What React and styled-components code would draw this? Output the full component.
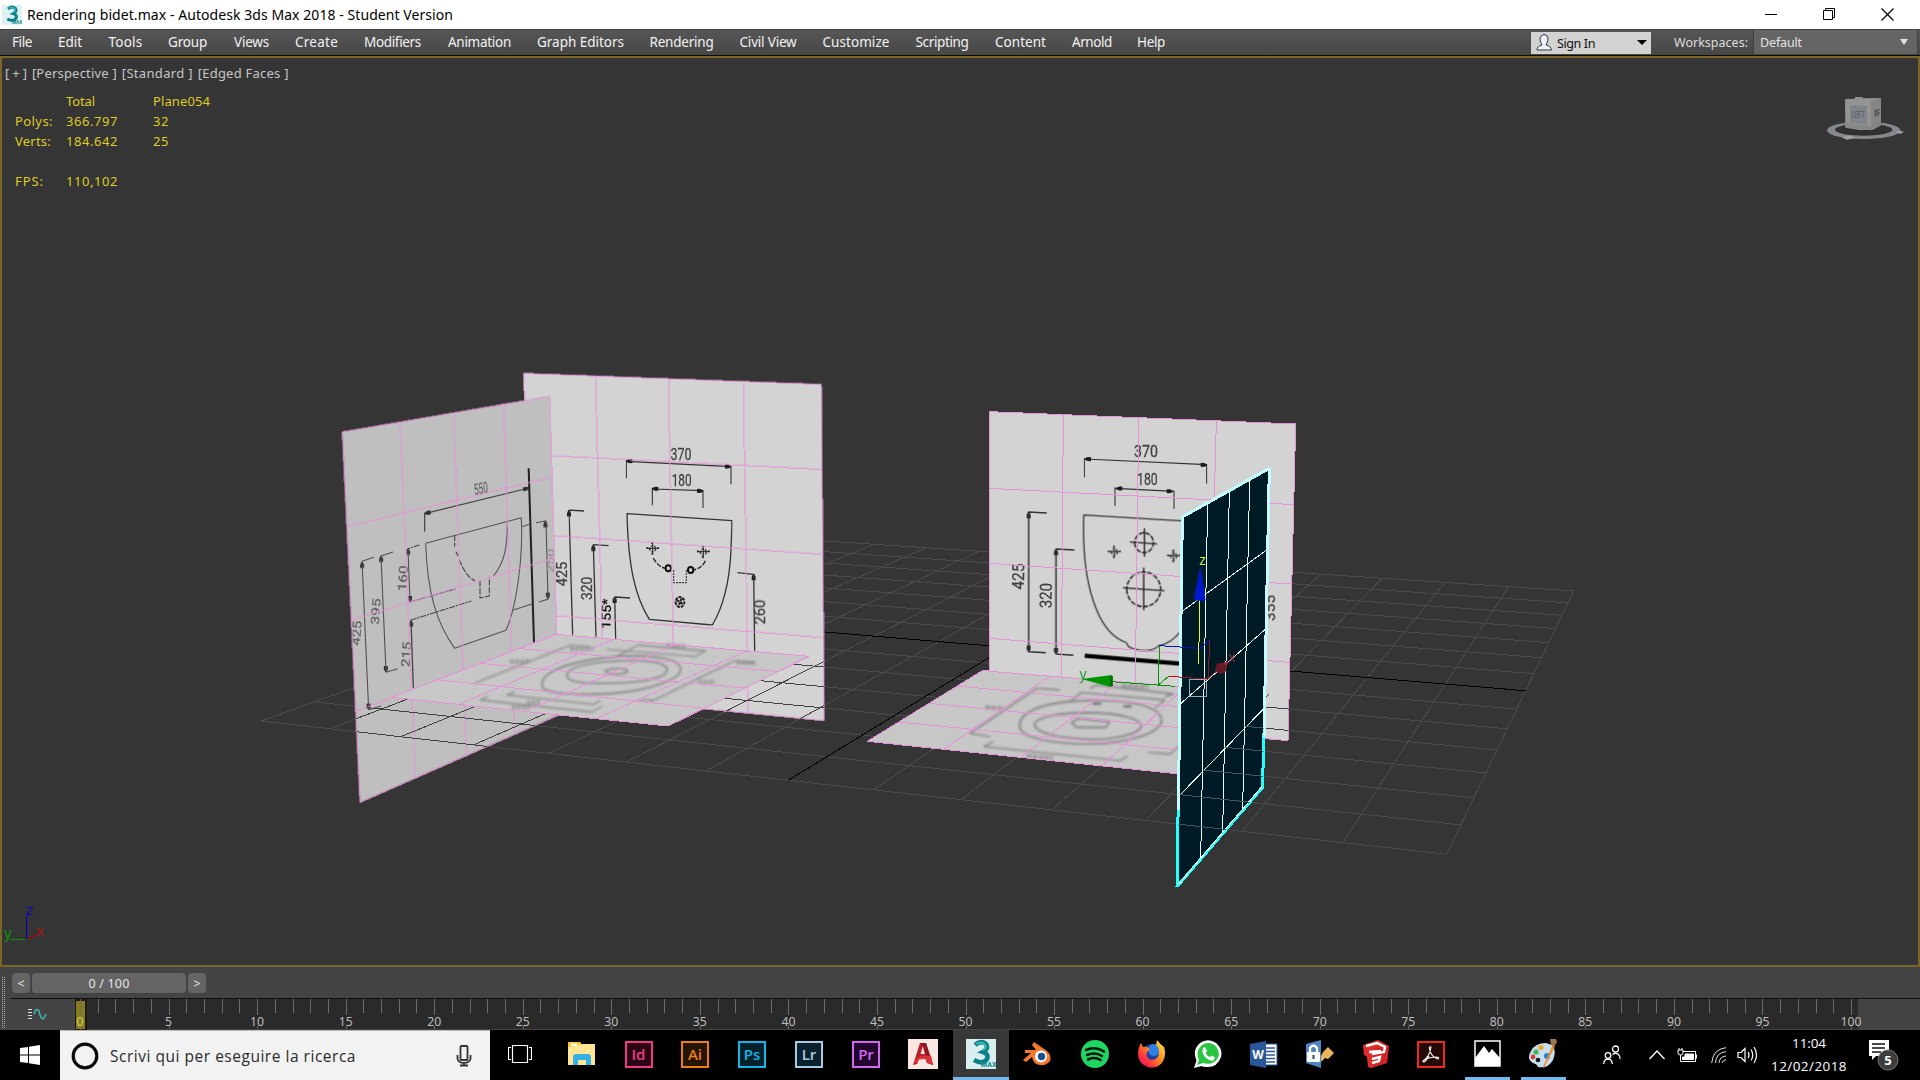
import React, { useLayoutEffect, useRef, useState } from "react";
import styled, { createGlobalStyle } from "styled-components";

const Global = createGlobalStyle`
  * { box-sizing: border-box; }
  body { margin: 0; background: #444; overflow: hidden; }
`;

const Screen = styled.div`
  width: 1920px;
  height: 1080px;
  display: flex;
  flex-direction: column;
  background: #444;
  font-family: "Noto Sans", "Open Sans", sans-serif;
  overflow: hidden;
`;

const FitSpan = styled.span`
  display: inline-block;
  white-space: pre;
  flex: none;
`;

/* Tracks the text so that it fills the given width. */
function Fit({ w, children }) {
  const ref = useRef(null);
  const [spacing, setSpacing] = useState(0);
  useLayoutEffect(() => {
    const natural = ref.current.getBoundingClientRect().width;
    setSpacing((w - natural) / String(children).length);
  }, [w, children]);
  return (
    <FitSpan ref={ref} style={{ letterSpacing: spacing }}>
      {children}
    </FitSpan>
  );
}

/* ---------- title bar ---------- */
const TitleBar = styled.header`
  height: 29px;
  flex: none;
  display: flex;
  align-items: center;
  background: #fff;
  color: #000;
  padding-left: 2px;
  font-size: 14px;
  line-height: 28px;
`;
const TitleText = styled.div`
  flex: 1;
  padding-left: 5px;
`;
const WindowButton = styled.div`
  width: 58.5px;
  height: 29px;
  display: flex;
  align-items: center;
  justify-content: center;
`;
const WindowButtons = styled.div`
  display: flex;
  padding-right: 3px;
`;

/* ---------- menu bar ---------- */
const MenuBar = styled.nav`
  height: 27px;
  flex: none;
  display: flex;
  align-items: center;
  background: linear-gradient(#565656, #464646);
  border-top: 1px solid #3f4440;
  border-bottom: 1px solid #0c0c0c;
  color: #f2f2f2;
  font-size: 13.5px;
  line-height: 25px;
  padding: 0 2px 0 12px;
`;
const MenuItems = styled.div`
  display: flex;
  flex: 1;
`;
const MenuItem = styled.div`
  width: ${(p) => p.$w}px;
  flex: none;
`;
const SignIn = styled.div`
  width: 120px;
  height: 22px;
  background: #d2d2d2;
  color: #111;
  display: flex;
  align-items: center;
  padding: 0 4px 0 5px;
  font-size: 12.5px;
`;
const SignInText = styled.div`
  flex: 1;
  padding: 2px 0 0 5px;
`;
const WorkspaceLabel = styled.div`
  padding: 0 5px 0 23px;
  color: #dcdcdc;
  font-size: 12.5px;
`;
const WorkspaceSelect = styled.div`
  width: 165px;
  height: 25px;
  background: #646464;
  border: 1px solid #404040;
  border-top: 0;
  color: #e4e4e4;
  display: flex;
  align-items: center;
  justify-content: space-between;
  padding: 0 9px 0 6px;
  font-size: 12.5px;
`;

/* ---------- viewport ---------- */
const Viewport = styled.main`
  height: 911px;
  flex: none;
  border: 2px solid #7a6629;
  background: #353535;
  position: relative;
`;
const Scene = styled.svg`
  display: block;
  width: 1916px;
  height: 907px;
`;
const Overlay = styled.div`
  position: absolute;
  left: 0;
  top: 0;
  color: #c6c6c6;
  font-size: 13px;
  line-height: 20px;
  padding: 5px 0 0 3px;
`;
const ViewLabels = styled.div`
  display: flex;
  gap: 4.9px;
`;
const Stats = styled.div`
  display: grid;
  grid-template-columns: 51px 87px 80px;
  grid-auto-rows: 20px;
  justify-items: start;
  padding: 7.5px 0 0 10px;
  color: #dfcb24;
`;

/* ---------- time controls ---------- */
const TimeArea = styled.section`
  height: 63px;
  flex: none;
  display: flex;
  background: #444;
`;
const Grip = styled.div`
  width: 3px;
  margin: 10px 6px 2px 2px;
  border-left: 1px dotted #aaa;
  border-right: 1px dotted #aaa;
`;
const TimeRows = styled.div`
  flex: 1;
  display: flex;
  flex-direction: column;
`;
const SliderRow = styled.div`
  height: 31px;
  display: flex;
  gap: 2px;
  padding: 6px 0 0 1px;
`;
const SliderButton = styled.div`
  width: ${(p) => p.$w}px;
  height: 20px;
  border-radius: 4px;
  background: #646464;
  color: #e6e6e6;
  font-size: 12.5px;
  line-height: 22px;
  text-align: center;
`;
const TrackRow = styled.div`
  height: 32px;
  display: flex;
  border-top: 1px solid #0e0e0e;
`;
const CurveButton = styled.div`
  width: 64px;
  display: flex;
  align-items: flex-start;
  padding: 9px 0 0 17px;
`;
const Track = styled.svg`
  display: block;
  width: 1783px;
  height: 31px;
  background: #2a2a2a;
  overflow: visible;
`;

/* ---------- taskbar ---------- */
const Taskbar = styled.footer`
  height: 50px;
  flex: none;
  display: flex;
  background: #000;
  color: #fff;
  font-family: "Open Sans", "Noto Sans", sans-serif;
`;
const StartButton = styled.div`
  width: 60px;
  display: flex;
  align-items: center;
  justify-content: center;
`;
const SearchBox = styled.div`
  width: 430px;
  background: #f2f2f2;
  border-top: 1px solid #b9b9b9;
  display: flex;
  align-items: center;
  color: #2b2b2b;
  font-size: 15.5px;
  padding: 0 18px 0 11px;
`;
const SearchText = styled.div`
  flex: 1;
  padding: 0 0 0 11px;
`;
const Slot = styled.div`
  width: ${(p) => p.$w || 57}px;
  flex: none;
  display: flex;
  align-items: center;
  justify-content: center;
  padding-bottom: ${(p) => (p.$open ? 0 : 2)}px;
  background: ${(p) => (p.$active ? "#383838" : "transparent")};
  border-bottom: ${(p) => (p.$open ? "3px solid #76b9ed" : "0")};
  margin: 0 ${(p) => p.$inset || 0}px;
`;
const AdobeTile = styled.div`
  width: 28px;
  height: 27px;
  border: 2px solid ${(p) => p.$c};
  background: ${(p) => p.$bg};
  color: ${(p) => p.$c};
  display: flex;
  align-items: center;
  justify-content: center;
  font-size: 15px;
  font-weight: 600;
  line-height: 20px;
`;
const Tray = styled.div`
  flex: 1;
  display: flex;
  align-items: center;
  padding-left: 31px;
`;
const TrayIcon = styled.div`
  width: ${(p) => p.$w}px;
  display: flex;
  justify-content: center;
  flex: none;
`;
const Clock = styled.div`
  width: 88px;
  display: flex;
  flex-direction: column;
  align-items: center;
  font-size: 13.5px;
  line-height: 23px;
`;

const S = 1 / 3;

/* Projects the ground plane (14 x 14 cells) on the view. */
function solveGround() {
  const src = [[0, 0], [14, 0], [14, 14], [0, 14]];
  const dst = [[261, 721], [1446.7, 854.3], [1573.7, 591], [772.7, 537.5]];
  const m = [];
  src.forEach(([u, v], i) => {
    const [x, y] = dst[i];
    m.push([u, v, 1, 0, 0, 0, -u * x, -v * x, x]);
    m.push([0, 0, 0, u, v, 1, -u * y, -v * y, y]);
  });
  for (let c = 0; c < 8; c++) {
    let p = c;
    for (let r = c + 1; r < 8; r++) if (Math.abs(m[r][c]) > Math.abs(m[p][c])) p = r;
    [m[c], m[p]] = [m[p], m[c]];
    for (let r = 0; r < 8; r++) {
      if (r === c) continue;
      const f = m[r][c] / m[c][c];
      for (let k = c; k < 9; k++) m[r][k] -= f * m[c][k];
    }
  }
  const h = m.map((row, i) => row[8] / row[i]);
  return (u, v) => {
    const w = h[6] * u + h[7] * v + 1;
    return [(h[0] * u + h[1] * v + h[2]) / w, (h[3] * u + h[4] * v + h[5]) / w];
  };
}
const ground = solveGround();
const groundLines = [];
for (let i = 0; i <= 14; i++) {
  groundLines.push({ k: "u" + i, a: ground(i, 0), b: ground(i, 14), axis: i === 7 });
  groundLines.push({ k: "v" + i, a: ground(0, i), b: ground(14, i), axis: i === 7 });
}
groundLines.sort((p, q) => p.axis - q.axis);

function Ground({ color, axis = "#000", clip }) {
  return (
    <g clipPath={clip} shapeRendering="crispEdges">
      {groundLines.map((l) => (
        <line key={l.k} x1={l.a[0]} y1={l.a[1]} x2={l.b[0]} y2={l.b[1]} stroke={l.axis ? axis : color} />
      ))}
    </g>
  );
}

const Strokes = styled.path`
  fill: none;
  stroke: ${(p) => p.$c || "#333"};
  stroke-width: ${(p) => p.$w || 1.1}px;
  stroke-linejoin: bevel;
  vector-effect: non-scaling-stroke;
  stroke-dasharray: ${(p) => p.$dash || "none"};
  opacity: ${(p) => p.$o || 1};
`;
const Mesh = styled(Strokes).attrs({ shapeRendering: "crispEdges" })`
  stroke: ${(p) => p.$c || "#e692d9"};
  stroke-width: ${(p) => p.$w || 1}px;
`;

function Dim({ x, y, r = 0, skew = 0, w = 64, size = 48, fill = "#404040", children }) {
  return (
    <text
      transform={`translate(${x} ${y}) rotate(${r}) skewY(${skew})`}
      fontFamily="Roboto, sans-serif"
      fontSize={size}
      fontWeight="400"
      textLength={w}
      lengthAdjust="spacingAndGlyphs"
      textAnchor="middle"
      fill={fill}
      stroke={fill}
      strokeWidth="0.8"
    >
      {children}
    </text>
  );
}

function Heads({ pts, c = "#1c1c1c" }) {
  return pts.map(([x, y, a], i) => (
    <path key={i} d="M0 -2L8 -6H18V6H8L0 2Z" fill={c} transform={`translate(${x} ${y}) rotate(${a})`} />
  ));
}

const Cross = ({ x, y }) => (
  <g transform={`translate(${x} ${y})`}>
    <Strokes $c="#333" $w={1.1} d="M-19 -1H19M0 -19V19" />
    <Strokes $c="#333" $w={1.4} $dash="2 1.4" d="M-9 0A9 9 0 1 0 9 0A9 9 0 1 0 -9 0M-17 -5V4M17 -5V4M-5 -16H5M-5 15H5" />
  </g>
);

function LeftModel() {
  return (
    <>
      <g transform={`translate(330 360) scale(${S})`}>
        <path fill="#d3d3d3" d="M581 40L1474 73L1483 1082L1118 1046L600 995Z" />
        <g filter="url(#ink)">
          <Dim x={1053} y={300} w={63}>370</Dim>
          <Dim x={1055} y={377} w={60}>180</Dim>
          <Strokes d="M889 304L1203 320M889 300V355M1203 318V373M967 387L1119 392M967 383V436M1119 390V444" />
          <Heads pts={[[889, 303, 2], [1203, 320, 182], [967, 386, 2], [1119, 393, 182], [717, 451, 90], [790, 555, 90], [854, 711, 90], [1271, 643, 90]]} />
          <Strokes $w={1.3} d="M891 461L1206 482L1203 570C1199 660 1180 740 1147 795L958 778C915 710 895 620 891 461Z" />
          <Cross x={968} y={566} />
          <Cross x={1120} y={576} />
          <Strokes $c="#222" $w={1.4} $dash="5 1.5" d="M970 594Q985 622 1008 625M1126 602Q1116 626 1089 630" />
          <Strokes $c="#111" $w={2} d="M1007 625A8 9 0 1 0 1023 625A8 9 0 1 0 1007 625M1074 630A8 9 0 1 0 1090 630A8 9 0 1 0 1074 630" />
          <Strokes $c="#333" $dash="2 1" d="M1031 630V668H1069V628" />
          <Strokes $c="#222" $w={2} $dash="3 1" d="M1037 726A13 15 0 1 0 1063 726A13 15 0 1 0 1037 726M1040 720L1060 733M1055 715L1045 740" />
          <Strokes $w={1.3} d="M762 453L717 450L728 824M836 557L790 554L798 830M900 714L854 711L857 836M1222 638L1271 643L1274 872" />
          <Dim x={712} y={642} r={-90} w={74} size={44}>425</Dim>
          <Dim x={785} y={685} r={-90} w={70} size={44}>320</Dim>
          <Dim x={842} y={762} r={-88} w={90} size={38} fill="#111">155*</Dim>
          <Dim x={1306} y={756} r={-90} w={74} size={44}>260</Dim>
        </g>
        <Mesh d="M796 47L817 835M1015 55L1030 852M1240 64L1255 1058M663 287L1475 328M672 527L1478 583M680 767L1481 833M585 140L581 40L1474 73L1483 1082L1118 1046" />

        <path fill="#bfbfbf" d="M37 216L659 109L680 823L686 1065L90 1327Z" />
        <g filter="url(#ink)">
          <Dim x={454} y={401} r={-6} skew={-6} w={42} size={46} fill="#666">550</Dim>
          <Strokes $c="#444" $w={1.2} d="M284 461L597 384M284 458V515" />
          <Heads c="#333" pts={[[284, 461, -14], [597, 384, 166], [96, 606, 88], [153, 588, 88], [234, 566, 88], [240, 726, 270], [243, 782, 88], [646, 484, 88], [654, 716, 268], [116, 1049, 268], [168, 936, 268]]} />
          <Strokes $c="#222" $w={2} d="M596 325L612 848" />
          <Strokes $c="#555" d="M287 550L574 473C580 590 560 740 528 811L374 865C320 790 292 700 287 550M576 500L598 493M550 750L606 732M532 482C533 570 520 612 490 648" />
          <Strokes $c="#444" $dash="6 1.5" d="M388 600C400 630 415 655 435 662M450 662V714L478 708V652M374 526V560M378 575L384 588" />
          <Strokes $c="#505050" d="M132 592L96 604L116 1049L153 1038M189 576L153 588L168 937L203 926M234 566L240 726M618 488L648 482L654 718L627 726" />
          <Strokes $c="#444" $dash="6 1 2 1" d="M268 555L234 566M243 780L424 723M240 726L378 686" />
          <Strokes $c="#444" $w={1.3} d="M243 780L250 984" />
          <Dim x={92} y={820} r={-86} w={74} size={36} fill="#666">425</Dim>
          <Dim x={149} y={755} r={-86} w={78} size={34} fill="#666">395</Dim>
          <Dim x={231} y={656} r={-86} w={78} size={36} fill="#606060">160</Dim>
          <Dim x={241} y={884} r={-86} w={76} size={36} fill="#606060">215</Dim>
          <Dim x={673} y={602} r={-88} w={72} size={26} fill="#909090">250</Dim>
        </g>
        <Mesh d="M210 186L257 1252M371 158L409 1185M521 131L553 1120M50 500L663 352M63 780L671 594M77 1055L680 823M680 823L659 109L37 216L90 1327L686 1065" />
      </g>
      <Ground color="#404040" axis="#222" clip="url(#underLeft)" />
      <g transform={`translate(330 360) scale(${S})`}>
        <path fill="#c7c7c7" d="M680 823L1437 889L1015 1098L686 1065L185 1012Z" />
        <g filter="url(#soft)">
          <Strokes $c="#808080" $w={1.3} $o={0.9} d="M433 970L720 856L780 860M860 890L925 855L1127 873L1100 886M450 1020L785 1056L815 1040M530 1005L790 1033L812 1022M965 1024L1215 902L1270 908M925 1020H970M450 1020L475 1010M530 1005L555 995M830 868L1100 890" />
          <Strokes $c="#808080" $w={1.6} d="M640 985C620 945 690 908 850 890C960 882 1060 895 1052 932C1045 960 960 990 850 1000C740 1008 655 1000 640 985Z" />
          <Strokes $c="#808080" $w={1.5} d="M715 955C690 925 780 903 890 902C980 900 1025 915 1008 938C985 965 880 970 800 970C755 970 725 966 715 955M825 934C840 920 900 925 892 935C880 946 830 944 825 934Z" />
          <Strokes $c="#808080" $w={4.5} $o={0.55} $dash="4 1" d="M720 868L790 866M540 905L597 904M590 1028L630 1026M545 1042L600 1042M1220 908L1280 908M1105 966L1155 966M1010 856L1070 859" />
        </g>
        <Mesh d="M855 837L393 1030M1031 855L601 1048M1252 872L803 1074M569 866L1343 934M449 910L1245 984M328 960L1122 1045M680 823L1437 889L1015 1098L686 1065L185 1012Z" />
      </g>
    </>
  );
}

function RightModel() {
  return (
    <>
      <g transform={`translate(860 400) scale(${S})`}>
        <path fill="#d3d3d3" d="M388 35L1307 72L1284 1022L950 985L388 830Z" />
        <g filter="url(#ink)">
          <Dim x={858} y={172} w={72} size={52}>370</Dim>
          <Dim x={862} y={254} w={62} size={52}>180</Dim>
          <Strokes d="M673 177L1040 194M673 174V232M1040 192V251M765 265L942 274M765 262V318M942 272V326" />
          <Heads pts={[[675, 177, 2], [1040, 195, 182], [769, 265, 2], [938, 274, 182], [506, 337, 90], [588, 448, 90], [506, 755, 270], [588, 762, 270]]} />
          <Strokes $w={1.3} d="M970 363L671 345C667 470 680 560 710 630C735 690 765 716 798 727L806 740C835 756 878 756 896 737C925 734 948 712 965 690" />
          <Strokes $c="#222" $w={1.5} $dash="5 1.5" d="M824 428A28 30 0 1 0 880 428A28 30 0 1 0 824 428M800 568A51 52 0 1 0 902 568A51 52 0 1 0 800 568" />
          <Strokes $c="#222" $w={1.4} d="M810 426L891 432M853 385V470M789 563L913 572M851 503V630" />
          <Cross x={763} y={456} />
          <Cross x={941} y={468} />
          <Strokes $w={1.5} d="M560 339L506 336V755L557 758M643 450L588 447V762L640 766" />
          <Dim x={492} y={530} r={-89} w={78} size={50}>425</Dim>
          <Dim x={575} y={587} r={-89} w={76} size={50}>320</Dim>
          <Dim x={1246} y={624} r={-90} w={78} size={44}>355</Dim>
          <Strokes $c="#000" $w={4.2} d="M674 767L965 791" />
        </g>
        <Mesh d="M610 43L604 832M836 53L826 850M1069 63L1063 300M388 265L1063 300L1300 314M388 490L1292 552M388 715L1288 787M388 815V35L1307 72L1284 1022L1205 1015" />
        <path fill="#c7c7c7" d="M370 810L960 859V1123L22 1024Z" />
        <g filter="url(#soft)">
          <Strokes $c="#7c7c7c" $w={1.6} d="M480 985C470 940 540 905 680 902C800 898 900 915 905 960C905 1000 800 1030 690 1032C580 1032 490 1015 480 985ZM523 975C525 950 600 938 690 938C780 940 840 955 845 978C840 1002 770 1018 690 1018C600 1016 530 1000 523 975ZM635 968L655 955L748 965L738 982L650 982Z" />
          <Strokes $c="#7c7c7c" $w={1.4} d="M600 870L530 865L330 1000L390 1010M400 1025L372 1040L780 1082L803 1068M630 905L662 878L915 900L885 925M690 865L710 855L940 882L915 890M865 1057L930 1062L955 1040" />
          <Strokes $c="#808080" $w={4.5} $o={0.6} $dash="5 1" d="M375 922L430 926M500 1068L580 1074M785 857L865 861" />
          <Strokes $c="#555" $w={1.8} d="M697 911H723M790 919H815" />
        </g>
        <Mesh d="M567 830L252 1047M775 846L485 1070M955 880L730 1095M290 858L958 920M207 910L958 983M118 966L958 1050M388 813L370 810L22 1024L958 1122M388 814L958 860" />
      </g>
      <Ground color="#404040" clip="url(#underRight)" />
    </>
  );
}

function SelectedPlane() {
  return (
    <>
      <g transform={`translate(860 400) scale(${S})`}>
        <path fill="#011b26" d="M968 350L1228 206L1208 1162L952 1460Z" />
        <Mesh $c="#24ffff" $w={3} d="M956 1120L951 1460L1208 1162L1211 1000" />
        <Mesh $c="#c4fbff" $w={3} d="M955 1230L967 351L1228 205L1212 1010" />
        <Mesh $c="#fff" d="M955 1453L1206 1159" />
        <Mesh $c="#e8fbff" d="M1043 312L1022 1375M1108 275L1088 1300M1169 240L1148 1225M966 634L1220 450M963 910L1216 688M958 1187L1212 925" />
      </g>
      <Ground color="#44565f" clip="url(#underSelected)" />
      <g transform={`translate(860 400) scale(${S})`}>
        <Mesh $c="#009400" d="M945 859L755 845M895 855L898 738M895 855L926 829" />
        <path fill="#009400" d="M664 837L750 826L758 828V857L750 860Z" />
        <path fill="#006d00" d="M750 826L758 828V857L750 860Z" />
        <Mesh $c="#0012c8" d="M898 737L1020 745L1048 721" />
        <Mesh $c="#c40010" d="M926 829L957 831" />
        <Mesh $c="#8e1a26" d="M957 831L1043 837M1046 837L1048 721M1041 839L1075 808" />
        <Mesh $c="#dfff22" d="M1016 792L1019 600" />
        <path fill="#0018d0" d="M1021 497L1037 601Q1018 605 1002 599Z" />
        <path fill="#c51b24" d="M1104 786L1097 808L1083 790Z" />
        <ellipse fill="#641c28" cx="1083" cy="805" rx="17" ry="17" />
        <Mesh $c="#9aadb6" d="M988 838H1040V890H988Z" />
        <text x="1028" y="494" fontFamily="Noto Sans, sans-serif" fontSize="42" textAnchor="middle" fill="#d3ef33">z</text>
        <text x="1116" y="786" fontFamily="Noto Sans, sans-serif" fontSize="42" textAnchor="middle" fill="#96303a">x</text>
        <text x="669" y="836" fontFamily="Noto Sans, sans-serif" fontSize="42" textAnchor="middle" fill="#2a9a2a">y</text>
      </g>
    </>
  );
}

function ViewCube() {
  return (
    <g transform={`translate(1500 0) scale(${S})`}>
      <ellipse cx="1091" cy="391" rx="110" ry="26" fill="#85898e" />
      <ellipse cx="1091" cy="389" rx="86" ry="18" fill="#303030" />
      <path d="M1195 392L1212 395L1203 401L1190 398ZM1025 412L1050 407L1066 414L1040 419Z" fill="#a1a4a7" />
      <path d="M1035 297L1065 296V291H1088V295L1143 294V376L1118 389L1080 390L1036 383Z" fill="#949494" />
      <path d="M1112 304L1143 294V376L1115 390Z" fill="#858585" />
      <path d="M1050 316L1101 318V374L1050 368Z" fill="#7f848a" />
      <path d="M1036 368L1112 378L1141 364V376L1118 389L1036 383Z" fill="#818181" opacity=".7" />
      <text x="1075" y="353" textAnchor="middle" fontSize="25" fontWeight="700" fontFamily="Roboto, sans-serif" textLength="40" lengthAdjust="spacingAndGlyphs" fill="#60656b">LEFT</text>
      <path d="M1124 332L1139 328M1126 349L1136 338L1126 333V349M1130 333L1137 345" stroke="#555" strokeWidth="4" fill="none" />
    </g>
  );
}

function Tripod() {
  return (
    <g fontFamily="Noto Sans, sans-serif" fontSize="15">
      <g shapeRendering="crispEdges">
        <path d="M26.5 939V915" stroke="#0000b0" />
        <path d="M26 939.5H10" stroke="#0b8f0b" />
        <path d="M27 939L37 935" stroke="#b00000" />
      </g>
      <text x="26" y="915" fill="#0808b8">z</text>
      <text x="36" y="936" fill="#b01010">x</text>
      <text x="4" y="938" fill="#129012">y</text>
    </g>
  );
}

/* label, text width, distance to the next label */
const menu = [
  ["File", 20, 46], ["Edit", 24, 50.5], ["Tools", 34, 59.5], ["Group", 39, 66], ["Views", 35, 61], ["Create", 43, 69],
  ["Modifiers", 57, 84], ["Animation", 63, 89], ["Graph Editors", 87, 112.5], ["Rendering", 64, 90], ["Civil View", 57, 83],
  ["Customize", 67, 93], ["Scripting", 53, 79.5], ["Content", 51, 77], ["Arnold", 40, 65], ["Help", 28, 40],
];

const MaxLogo = ({ w, h, plate }) => (
  <svg width={w} height={h} viewBox="0 0 30 30" preserveAspectRatio="none">
    <rect width="30" height="30" fill={plate} />
    <path d="M9 6Q15 1 20 5Q23 10 17 13Q23 15 21 20Q17 26 8 21" fill="none" stroke="#0d7f86" strokeWidth="4.6" />
    <path d="M10 5Q15 2 19 5.500Q21 9 17 11" fill="none" stroke="#35b5b4" strokeWidth="2.2" />
    <text x="15" y="28" fontSize="7" fontWeight="700" fontFamily="Roboto, sans-serif" fill="#0d8b91">MAX</text>
  </svg>
);

const Explorer = () => (
  <svg width="28" height="24" viewBox="0 0 28 24">
    <path d="M0 0H12L13 2H27V23H0Z" fill="#ffe594" />
    <path d="M0 0H12L14 3H3V5H0Z" fill="#f9c72f" /><rect x="3" y="1.500" width="6" height="2" fill="#fff" />
    <path d="M5 23V15Q5 12 8 12H20Q23 12 23 15V23H18V18H10V23Z" fill="#35b0e6" />
  </svg>
);
const Autocad = () => (
  <svg width="30" height="30" viewBox="0 0 30 30">
    <rect width="30" height="30" fill="#fae7e2" />
    <path d="M5 26L12 4H18L25 26L19 24L17 19L11 20L9 25Z" fill="#bd1e25" />
    <path d="M12.500 15L15 7L17 15Z" fill="#fae7e2" /><path d="M12 4H18L25 26L20 24L15 7Z" fill="#8f1620" />
    <path d="M6 23L12 17L23 16.500L25 26L19 24L18 20L11 20.500L9 25Z" fill="#d8343a" />
  </svg>
);
const Blender = () => (
  <svg width="29" height="24" viewBox="0 0 29 24">
    <path d="M11 0L24 9Q29 14 27 19Q23 24 17 23Q10 22 9 15L3 20L0 18L8 11H2V8H13L9 3Z" fill="#f5792a" />
    <circle cx="18" cy="14.500" r="6" fill="#fff" /><circle cx="18.500" cy="14.500" r="3.700" fill="#1a4f8f" />
  </svg>
);
const Spotify = () => (
  <svg width="28" height="28" viewBox="0 0 28 28">
    <circle cx="14" cy="14" r="14" fill="#1ed760" />
    <path d="M5 10Q14 6 23 11.500M6 15Q14 11.500 21 16M7 19.500Q14 16.500 19.500 20" stroke="#0a120c" strokeWidth="2.500" fill="none" strokeLinecap="round" />
  </svg>
);
const Firefox = () => (
  <svg width="28" height="28" viewBox="0 0 28 28">
    <defs><linearGradient id="fox" x1="1" y1="0" x2="0" y2="1"><stop offset="0" stopColor="#fff14a" /><stop offset=".45" stopColor="#ff8a1e" /><stop offset=".75" stopColor="#ff2a42" /><stop offset="1" stopColor="#d8109a" /></linearGradient></defs>
    <circle cx="14" cy="15" r="11" fill="#243f9e" />
    <circle cx="16" cy="10" r="6" fill="#2b82e4" />
    <path d="M19 0Q22 4 26 7Q29 16 24 23Q18 29 10 27Q1 24 0 15Q0 8 3 3L5 7Q9 6 12 9L9 12Q7 18 13 20Q21 20 21 12Q21 7 18 5Z" fill="url(#fox)" />
  </svg>
);
const Whatsapp = () => (
  <svg width="28" height="28" viewBox="0 0 28 28">
    <path d="M0 28L2.500 20.500Q-2 10 6 3Q14 -2.500 22 3Q29 9 27 17Q23 28 12 27Q9 27 7.500 26Z" fill="#fff" />
    <path d="M3 25L5 20Q1 11 7.500 5.500Q14 1 20.500 5Q27 11 24 18Q19 26 9 23Z" fill="#29c441" />
    <path d="M9 8L11 7L13 11L11.500 13Q13 16 16 17L18 15.500L21 17.500L20 20Q17 22 12 18Q7 13 9 8Z" fill="#fff" />
  </svg>
);
const Word = () => (
  <svg width="28" height="27" viewBox="0 0 28 27">
    <rect x="14" y="3" width="13" height="21" fill="#fff" stroke="#2b579a" />
    <path d="M16 7H25M16 10.500H25M16 14H25M16 17.500H25M16 21H25" stroke="#2b579a" strokeWidth="1.500" />
    <path d="M0 3L16 0V27L0 24Z" fill="#2b579a" />
    <text x="8" y="18" textAnchor="middle" fontFamily="Open Sans, sans-serif" fontWeight="700" fontSize="12" fill="#fff">W</text>
  </svg>
);
const LockKey = () => (
  <svg width="28" height="28" viewBox="0 0 28 28">
    <path d="M0 4L15 0V28L0 23Z" fill="#4b86c0" />
    <rect x="1" y="12" width="13" height="10" rx="1" fill="#fff" />
    <path d="M4 12V8Q7.500 3 11 8V12" stroke="#fff" strokeWidth="2.300" fill="none" /><path d="M7.500 15V19" stroke="#345" strokeWidth="2" />
    <path d="M22 7L28 13L22 19L19 18L15 22V16L17 12Z" fill="#e9b760" />
  </svg>
);
const Sketchup = () => (
  <svg width="26" height="28" viewBox="0 0 26 28">
    <path d="M0 5L15 0L26 6L24 23L8 28L5 27L4 17L1 15Z" fill="#e12b2b" />
    <path d="M0 5L8 9L26 6L24 23L8 28L10 10Z" fill="#c11d21" opacity=".45" />
    <path d="M3 6L14 3L22 7L21 12L9 14M6 12L18 11M9 19L17 17L16 21L9 23" stroke="#fff" strokeWidth="2.400" fill="none" />
  </svg>
);
const Acrobat = () => (
  <svg width="28" height="27" viewBox="0 0 28 27">
    <rect x="1" y="1" width="26" height="25" fill="#250808" stroke="#ea2a1c" strokeWidth="2" />
    <path d="M6 20Q13 15 14 6Q12 5 12.500 8Q14 16 21 18Q23 16 19 16Q13 16 7 19Q5 21 7 21Q9 20 12 15" fill="none" stroke="#eee" strokeWidth="1.200" />
  </svg>
);
const Photos = () => (
  <svg width="27" height="27" viewBox="0 0 27 27">
    <rect x="1" y="1" width="25" height="25" stroke="#fff" strokeWidth="1.500" />
    <path d="M1 18L10 6L15 13L18 9L26 18V26H1Z" fill="#fff" />
  </svg>
);
const Paint = () => (
  <svg width="30" height="29" viewBox="0 0 30 29">
    <path d="M18 4Q7 4 3 12Q-2 20 5 24Q9 25 10 28Q20 30 25 21Q29 12 24 6Z" fill="#c9deed" />
    <circle cx="8" cy="13" r="2.600" fill="#3fb54c" /><circle cx="13" cy="8.500" r="2.600" fill="#f1a52e" /><circle cx="5" cy="18" r="2.400" fill="#e43d34" />
    <circle cx="10" cy="21" r="2.300" fill="#101820" /><circle cx="19" cy="17" r="3" fill="#2d7fd0" />
    <path d="M25 5L27 7L16 29L15 28Z" fill="#ef8a2e" /><path d="M22 0H28L29 3L26 8L23 6Z" fill="#a0764a" />
  </svg>
);
const Adobe = ({ c, bg, t }) => <AdobeTile $c={c} $bg={bg}>{t}</AdobeTile>;

const ticks = Array.from({ length: 101 }, (_, i) => i);

export default function App() {
  return (
    <Screen>
      <Global />
      <TitleBar>
        <MaxLogo w={20} h={20} plate="#dff0f1" />
        <TitleText><Fit w={426}>Rendering bidet.max - Autodesk 3ds Max 2018 - Student Version</Fit></TitleText>
        <WindowButtons>
          <WindowButton><svg width="12" height="12"><path d="M0 5.500H12" stroke="#000" /></svg></WindowButton>
          <WindowButton><svg width="13" height="13" fill="none" stroke="#000"><path d="M.5 2.500H9.500V11.500H.5ZM2.500 2V.5H11.500V9.500H10" /></svg></WindowButton>
          <WindowButton><svg width="13" height="13"><path d="M.5 .5L12.500 12.500M12.500 .5L.5 12.500" stroke="#000" strokeWidth="1.200" /></svg></WindowButton>
        </WindowButtons>
      </TitleBar>

      <MenuBar>
        <MenuItems>{menu.map(([t, w, step]) => <MenuItem key={t} $w={step}><Fit w={w}>{t}</Fit></MenuItem>)}</MenuItems>
        <SignIn>
          <svg width="16" height="17" viewBox="0 0 16 17"><path d="M1 16Q1 12 6 11Q4 8 4 4.500Q5 .5 8 .5Q11.500 .5 12 4.500Q12 8 10 11Q15 12 15.500 16Z" fill="#eef2f6" stroke="#29384a" /></svg>
          <SignInText><Fit w={38}>Sign In</Fit></SignInText>
          <svg width="10" height="5"><path d="M0 0H10L5 5Z" fill="#000" /></svg>
        </SignIn>
        <WorkspaceLabel><Fit w={74}>Workspaces:</Fit></WorkspaceLabel>
        <WorkspaceSelect>
          <Fit w={42}>Default</Fit>
          <svg width="8" height="6"><path d="M0 0H8L4 6Z" fill="#e4e4e4" /></svg>
        </WorkspaceSelect>
      </MenuBar>

      <Viewport>
        <Scene viewBox="2 58 1916 907">
          <defs>
            <filter id="soft" x="-5%" y="-5%" width="110%" height="110%"><feGaussianBlur stdDeviation="2.8" /></filter>
            <filter id="ink" x="-5%" y="-5%" width="110%" height="110%"><feGaussianBlur stdDeviation="1.1" /></filter>
            <clipPath id="underLeft">
              <path d="M355.700 711.700L556.700 634.300L558.700 715L360 802.300ZM556.700 634.300L809 656.300L823.500 658L824.300 720.700L702.700 708.700L640 700Z" />
            </clipPath>
            <clipPath id="underRight"><path d="M1263 693L1290 697L1288 740.700L1262 738.500Z" /></clipPath>
            <clipPath id="underSelected"><path d="M1179 795.700L1264 706L1262.700 787.300L1177.500 886Z" /></clipPath>
          </defs>
          <Ground color="#4a4a4a" />
          <LeftModel />
          <RightModel />
          <SelectedPlane />
          <ViewCube />
          <Tripod />
        </Scene>
        <Overlay>
          <ViewLabels>
            <Fit w={22}>[ + ]</Fit><Fit w={85}>[Perspective ]</Fit><Fit w={71}>[Standard ]</Fit><Fit w={91}>[Edged Faces ]</Fit>
          </ViewLabels>
          <Stats>
            <span /><Fit w={29}>Total</Fit><Fit w={57}>Plane054</Fit>
            <Fit w={38}>Polys:</Fit><Fit w={52}>366.797</Fit><Fit w={16}>32</Fit>
            <Fit w={36}>Verts:</Fit><Fit w={52}>184.642</Fit><Fit w={16}>25</Fit>
            <span /><span /><span />
            <Fit w={29}>FPS:</Fit><Fit w={52}>110,102</Fit>
          </Stats>
        </Overlay>
      </Viewport>

      <TimeArea>
        <Grip />
        <TimeRows>
          <SliderRow>
            <SliderButton $w={18}>&lt;</SliderButton>
            <SliderButton $w={154}><Fit w={41}>0 / 100</Fit></SliderButton>
            <SliderButton $w={18}>&gt;</SliderButton>
          </SliderRow>
          <TrackRow>
            <CurveButton>
              <svg width="20" height="12" fill="none"><path d="M0 1.500H4M0 4.500H4M0 7.500H4M0 10.500H4" stroke="#ddd" /><path d="M6 6Q8 -1 11 3Q13 13 16 10L18 6" stroke="#3fb5b5" strokeWidth="1.500" /></svg>
            </CurveButton>
            <Track>
              <rect y="0" width="12" height="31" fill="#1c1c10" />
              <rect x="1" y="2" width="9" height="28" fill="#867c22" />
              {ticks.map((i) => {
                const x = Math.round(5 + i * 17.71) + 0.5;
                return <path key={i} d={i % 5 ? `M${x} 0V14` : `M${x} 0V16M${x} 27V31`} stroke="#6c6c6c" />;
              })}
              {ticks.filter((i) => i % 5 === 0).map((i) => (
                <text key={i} x={5 + i * 17.71} y="27" textAnchor="middle" fontSize="12.500" fontFamily="Noto Sans, sans-serif" textLength={i < 10 ? 7 : i === 100 ? 21 : 14} lengthAdjust="spacingAndGlyphs" fill={i === 0 ? "#d9d36a" : "#bdbdbd"}>{i}</text>
              ))}
              <path d="M12 30.500H1783" stroke="#444" />
            </Track>
          </TrackRow>
        </TimeRows>
      </TimeArea>

      <Taskbar>
        <StartButton>
          <svg width="20" height="20" viewBox="0 0 20 20"><path d="M0 3L8 2V9.500H0ZM9 1.800L20 0V9.500H9ZM0 10.500H8V18L0 17ZM9 10.500H20V20L9 18.200Z" fill="#fff" /></svg>
        </StartButton>
        <SearchBox>
          <svg width="28" height="28"><circle cx="14" cy="14" r="11.800" fill="none" stroke="#0a0a0a" strokeWidth="3.200" /></svg>
          <SearchText><Fit w={246}>Scrivi qui per eseguire la ricerca</Fit></SearchText>
          <svg width="16" height="22" fill="none" stroke="#333" strokeWidth="1.800"><rect x="4.500" y="1" width="7" height="14" rx="1" /><path d="M1.500 10V14Q3 18 8 18Q13 18 14.500 14V10M8 18V20M4 20.500H12" /></svg>
        </SearchBox>
        <Slot $w={60}>
          <svg width="24" height="20" fill="none" stroke="#fff"><path d="M4.500 1.500H19.500V18.500H4.500ZM3 3.500H.5V15.500H3M21 3.500H23.500V15.500H21" strokeWidth="1.200" /></svg>
        </Slot>
        <Slot $w={63}><Explorer /></Slot>
        <Slot $w={51}><Adobe c="#ee3a86" bg="#2a0413" t="Id" /></Slot>
        <Slot $w={62}><Adobe c="#ee7d12" bg="#241503" t="Ai" /></Slot>
        <Slot $w={52}><Adobe c="#14b4e4" bg="#03202b" t="Ps" /></Slot>
        <Slot $w={62}><Adobe c="#a6cbe2" bg="#0c212e" t="Lr" /></Slot>
        <Slot $w={52}><Adobe c="#d268ee" bg="#23062f" t="Pr" /></Slot>
        <Slot $w={61}><Autocad /></Slot>
        <Slot $w={56} $active $open><MaxLogo w={30} h={30} plate="#d9eeee" /></Slot>
        <Slot><Blender /></Slot>
        <Slot><Spotify /></Slot>
        <Slot><Firefox /></Slot>
        <Slot $w={56}><Whatsapp /></Slot>
        <Slot $w={56}><Word /></Slot>
        <Slot $w={56}><LockKey /></Slot>
        <Slot $w={55}><Sketchup /></Slot>
        <Slot $w={56}><Acrobat /></Slot>
        <Slot $open $w={45} $inset={5.5}><Photos /></Slot>
        <Slot $open $w={45} $inset={5.5}><Paint /></Slot>
        <Tray>
          <TrayIcon $w={20}><svg width="18" height="20" fill="none" stroke="#fff" strokeWidth="1.300"><circle cx="12.500" cy="4" r="3" /><circle cx="5" cy="10.500" r="2.800" /><path d="M.7 19Q1 14 5 14Q9 14 9.300 19M9.500 9.500Q12 7.500 15 9Q17.300 11 17 14" /></svg></TrayIcon>
          <TrayIcon $w={70}><svg width="16" height="10" fill="none" stroke="#fff" strokeWidth="1.300"><path d="M.5 9L8 1L15.500 9" /></svg></TrayIcon>
          <TrayIcon $w={0}><svg width="20" height="15" viewBox="5 0 20 15" fill="none" stroke="#fff" overflow="visible"><path d="M6 3.500H18.500V13.500H3.500V9M19.500 6.500V10.500M1 2H6V5Q6 7 3.500 7Q1 7 1 5ZM2 0V2M5 0V2M3.500 7V9" /><path d="M8 6H16.500V11.500H5.500V9H8Z" fill="#fff" /></svg></TrayIcon>
          <TrayIcon $w={54}><svg width="16" height="17" fill="none" stroke="#ddd"><path d="M.7 16Q2 2 15 .7M4.500 16Q5 5.500 15 4.700M8 16Q8.500 9.500 15 9M11 16Q11.500 13 15 12.700" /></svg></TrayIcon>
          <TrayIcon $w={4}><svg width="22" height="18" viewBox="0 0 22 18" fill="none" stroke="#fff" strokeWidth="1.200" overflow="visible"><path d="M1 6.500H4L8 2.500V15.500L4 11.500H1ZM11 6Q13 9 11 12M14 3.500Q17.500 9 14 14.500M17 1Q22 9 17 17" /></svg></TrayIcon>
          <TrayIcon $w={15} />
          <Clock><Fit w={34}>11:04</Fit><Fit w={76}>12/02/2018</Fit></Clock>
          <TrayIcon $w={60}>
            <svg width="32" height="32" viewBox="0 0 32 32"><path d="M2 1H22V17H9L5 21V17H2Z" fill="#fff" /><path d="M5 5H18M5 9H18M5 13H14" stroke="#111" strokeWidth="1.300" /><circle cx="21" cy="21" r="10" fill="#3c3c3c" stroke="#777" strokeWidth="1" /><text x="21" y="26" fontSize="13" fontWeight="700" fontFamily="Open Sans, sans-serif" textAnchor="middle" fill="#fff">5</text></svg>
          </TrayIcon>
        </Tray>
      </Taskbar>
    </Screen>
  );
}
